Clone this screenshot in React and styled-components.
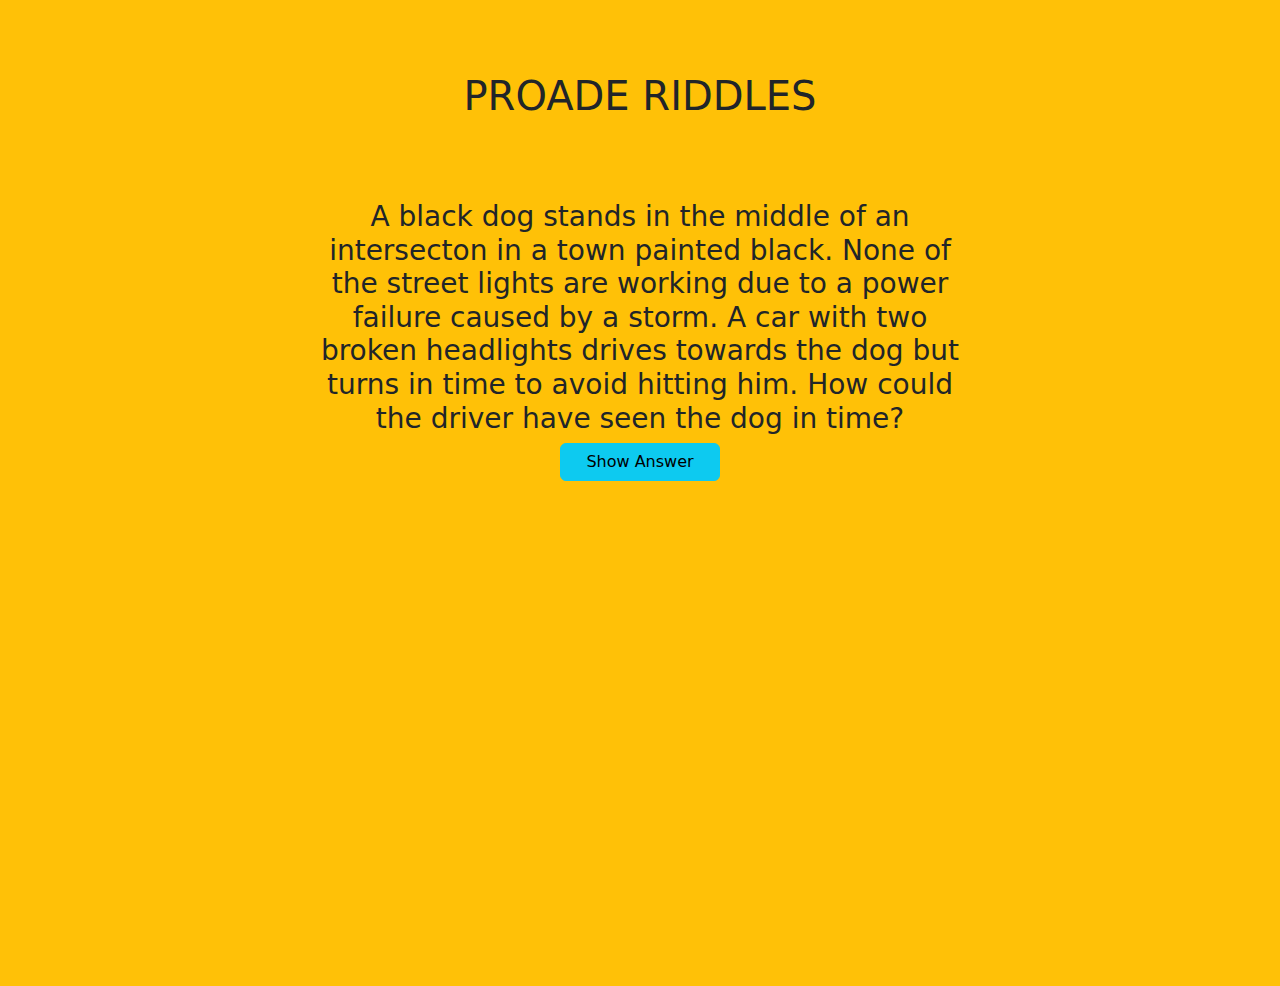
import React, { useState } from 'react';
import styled, { createGlobalStyle } from 'styled-components';

const GlobalStyle = createGlobalStyle`
  html, body {
    margin: 0;
    padding: 0;
    background: #ffc107;
  }
  body {
    font-family: "DejaVu Sans", "Liberation Sans", sans-serif;
    color: #212529;
    min-height: 100vh;
  }
`;

const Page = styled.div`
  min-height: 100vh;
  background: #ffc107;
  display: flex;
  flex-direction: column;
  align-items: center;
  padding-top: 72px;
  box-sizing: border-box;
`;

const Title = styled.h1`
  margin: 0 0 80px;
  font-size: 40px;
  font-weight: 500;
  line-height: 1.2;
  text-align: center;
`;

const RiddleCard = styled.div`
  width: 640px;
  display: flex;
  flex-direction: column;
  align-items: center;
`;

const Question = styled.h3`
  margin: 0 0 8px;
  font-size: 28px;
  font-weight: 500;
  line-height: 1.2;
  text-align: center;
`;

const AnswerButton = styled.button`
  width: 160px;
  height: 38px;
  padding: 6px 12px;
  border: 1px solid #0dcaf0;
  border-radius: 6px;
  background: #0dcaf0;
  color: #000;
  font-family: inherit;
  font-size: 16px;
  line-height: 1.5;
  cursor: pointer;
`;

const Answer = styled.p`
  margin: 12px 0 0;
  font-size: 20px;
  text-align: center;
`;

const riddle = {
  question:
    'A black dog stands in the middle of an intersecton in a town painted black. None of the street lights are working due to a power failure caused by a storm. A car with two broken headlights drives towards the dog but turns in time to avoid hitting him. How could the driver have seen the dog in time?',
  answer: 'It was daytime.',
};

export default function App() {
  const [shown, setShown] = useState(false);

  return (
    <Page>
      <GlobalStyle />
      <Title>PROADE RIDDLES</Title>
      <RiddleCard>
        <Question>{riddle.question}</Question>
        <AnswerButton onClick={() => setShown(!shown)}>
          {shown ? 'Hide Answer' : 'Show Answer'}
        </AnswerButton>
        {shown && <Answer>{riddle.answer}</Answer>}
      </RiddleCard>
    </Page>
  );
}
